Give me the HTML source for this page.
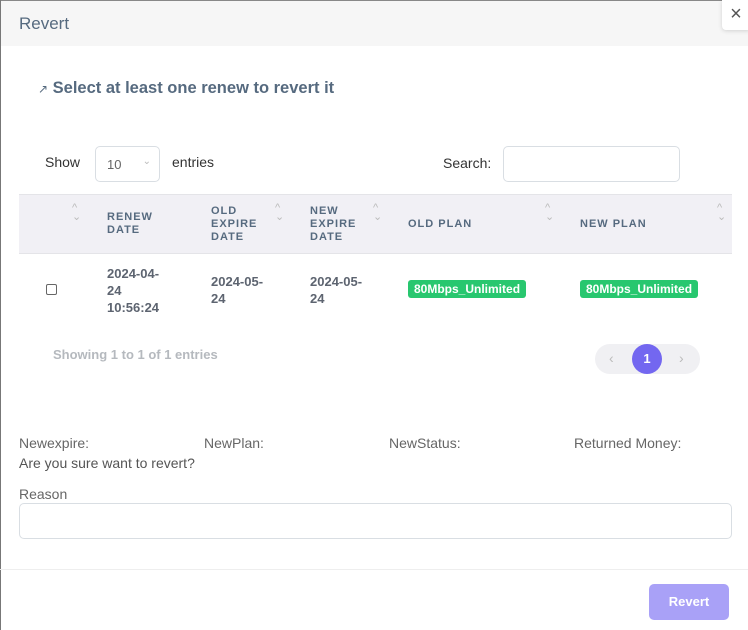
<!DOCTYPE html>
<html><head><style>
*{box-sizing:border-box;margin:0;padding:0}
body{width:748px;height:630px;background:#fff;font-family:"Liberation Sans",sans-serif;position:relative;overflow:hidden;color:#566a7f}
.a{position:absolute}
.hdr{left:0;top:0;width:748px;height:46px;background:#f6f6f6;border-top:1px solid #888;border-left:1px solid #777}
.lb{left:0;top:0;width:1px;height:630px;background:#777}
.th{font-size:11px;font-weight:bold;letter-spacing:1px;color:#566a7f;line-height:13px}
.bd{font-size:13px;font-weight:bold;color:#5d6470;line-height:16px}
.badge{background:#28c76f;color:#fff;font-size:12px;font-weight:bold;padding:2px 6px;border-radius:3px;line-height:14px}
.sort{font-size:11px;color:#bbb;line-height:9px}
.lt{font-size:14px;color:#666;font-weight:300}
</style></head><body>
<div class="a hdr"></div>
<div class="a lb"></div>
<div class="a" style="left:19px;top:14px;font-size:17px;color:#566a7f">Revert</div>
<div class="a" style="left:722px;top:0;width:28px;height:30px;background:#fff;border-radius:0 0 0 4px;box-shadow:0 1px 4px rgba(0,0,0,.15);font-size:20px;color:#555;text-align:center;line-height:28px">×</div>
<div class="a" style="left:38px;top:79px;font-size:16.5px;color:#566a7f;font-weight:bold"><span style="font-size:12px;font-weight:normal">↗</span> Select at least one renew to revert it</div>
<div class="a" style="left:45px;top:154px;font-size:14px;color:#333">Show</div>
<div class="a" style="left:95px;top:146px;width:65px;height:36px;border:1px solid #d9dee3;border-radius:5px;font-size:13px;color:#666;padding:10px 11px">10<span style="position:absolute;right:8px;top:9px;color:#bbb;font-size:10px">⌄</span></div>
<div class="a" style="left:172px;top:154px;font-size:14px;color:#333">entries</div>
<div class="a" style="left:443px;top:155px;font-size:14px;color:#333">Search:</div>
<div class="a" style="left:503px;top:146px;width:177px;height:36px;border:1px solid #d9dee3;border-radius:5px"></div>
<div class="a" style="left:19px;top:194px;width:713px;height:60px;background:#f1f0f5;border-top:1px solid #e4e4e8;border-bottom:1px solid #e4e4e8"></div>
<div class="a sort" style="left:72px;top:204px">^<br>⌄</div>
<div class="a th" style="left:107px;top:211px">RENEW<br>DATE</div>
<div class="a th" style="left:211px;top:205px">OLD<br>EXPIRE<br>DATE</div>
<div class="a sort" style="left:275px;top:204px">^<br>⌄</div>
<div class="a th" style="left:310px;top:205px">NEW<br>EXPIRE<br>DATE</div>
<div class="a sort" style="left:373px;top:204px">^<br>⌄</div>
<div class="a th" style="left:408px;top:218px">OLD PLAN</div>
<div class="a sort" style="left:545px;top:204px">^<br>⌄</div>
<div class="a th" style="left:580px;top:218px">NEW PLAN</div>
<div class="a sort" style="left:717px;top:204px">^<br>⌄</div>
<div class="a" style="left:46px;top:284px;width:11px;height:11px;border:1px solid #666;border-radius:2px"></div>
<div class="a bd" style="left:107px;top:265px;line-height:17px">2024-04-<br>24<br>10:56:24</div>
<div class="a bd" style="left:211px;top:273px;line-height:17px">2024-05-<br>24</div>
<div class="a bd" style="left:310px;top:273px;line-height:17px">2024-05-<br>24</div>
<div class="a badge" style="left:408px;top:280px">80Mbps_Unlimited</div>
<div class="a badge" style="left:580px;top:280px">80Mbps_Unlimited</div>
<div class="a" style="left:53px;top:347px;font-size:13px;font-weight:bold;color:#b5b9be">Showing 1 to 1 of 1 entries</div>
<div class="a" style="left:595px;top:344px;width:105px;height:30px;background:#f0f0f3;border-radius:15px;font-size:14px;color:#bbb"><span class="a" style="left:14px;top:6px">‹</span><span class="a" style="left:84px;top:6px">›</span></div>
<div class="a" style="left:632px;top:344px;width:30px;height:30px;border-radius:15px;background:#7367f0;color:#fff;font-size:13px;font-weight:bold;text-align:center;line-height:30px">1</div>
<div class="a lt" style="left:19px;top:435px">Newexpire:</div>
<div class="a lt" style="left:204px;top:435px">NewPlan:</div>
<div class="a lt" style="left:389px;top:435px">NewStatus:</div>
<div class="a lt" style="left:574px;top:435px">Returned Money:</div>
<div class="a" style="left:19px;top:455px;font-size:14px;color:#555">Are you sure want to revert?</div>
<div class="a lt" style="left:19px;top:486px">Reason</div>
<div class="a" style="left:19px;top:503px;width:713px;height:36px;border:1px solid #d9dee3;border-radius:5px"></div>
<div class="a" style="left:0;top:569px;width:748px;height:1px;background:#eee"></div>
<div class="a" style="left:649px;top:584px;width:80px;height:36px;background:#a9a1f7;border-radius:5px;color:#fff;font-size:13px;font-weight:bold;text-align:center;line-height:36px">Revert</div>
</body></html>
